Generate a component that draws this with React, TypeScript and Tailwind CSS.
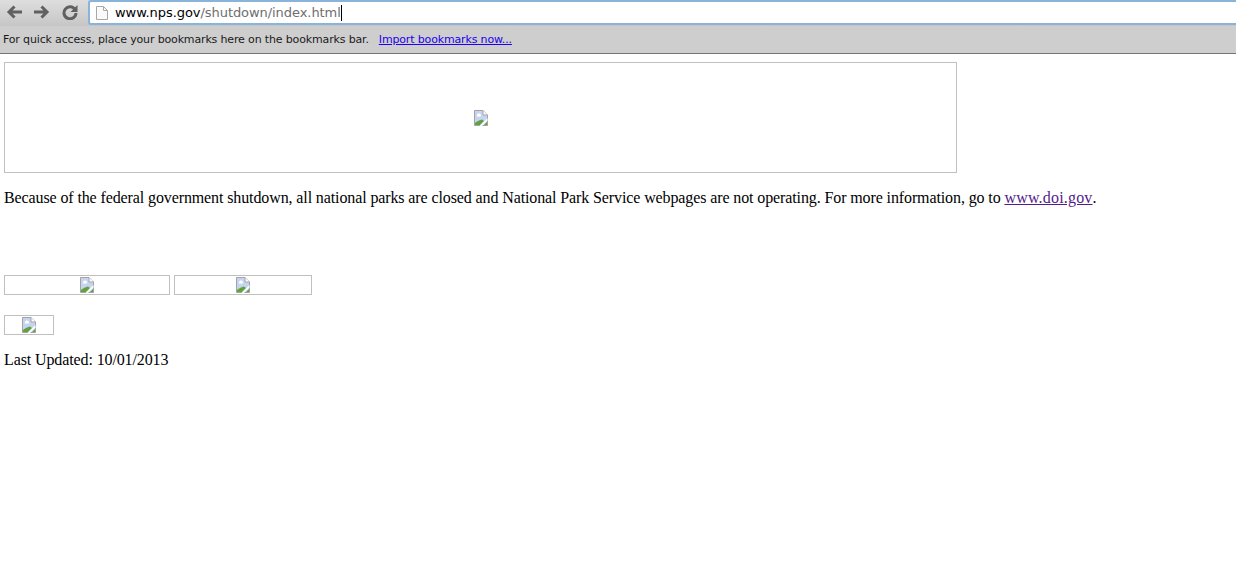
import React from 'react';

const BrokenImage: React.FC = () => (
  <svg width="14" height="16" viewBox="0 0 14 16" className="block">
    <path d="M0.5 0.5H9L13.5 5V15.5H0.5Z" fill="#c6d4f2" stroke="#a3a3a3" />
    <path d="M9 0.5V5H13.5" fill="#ffffff" stroke="#a3a3a3" />
    <path d="M3 5C4 3 6 3 7 5C8 6 6 7 4 6.5C3 6.5 2.5 6 3 5Z" fill="#ffffff" />
    <path d="M1 15V13C3 11 6 10 8 9.5L10 11L6 15Z" fill="#5fa33a" />
    <path d="M5.5 16L13.5 8V10.5L8 16Z" fill="#ffffff" />
    <path d="M10 15L13 12V15Z" fill="#5fa33a" />
  </svg>
);

const Placeholder: React.FC<{ className: string }> = ({ className }) => (
  <div className={`border border-[#c0c0c0] flex justify-center items-start ${className}`}>
    <BrokenImage />
  </div>
);

export default function App() {
  return (
    <div className="w-[1236px] h-[583px] overflow-hidden bg-white font-['Liberation_Serif',serif] text-black">
      <div className="h-[26px] flex items-start bg-gradient-to-b from-[#dedede] to-[#c6c6c6]">
        <div className="flex items-center gap-[12px] pl-[6px] pt-[4px] w-[88px] text-[#606060]">
          <svg width="16" height="16" viewBox="0 0 16 16" fill="none" stroke="currentColor" strokeWidth="3">
            <path d="M16 8H3M8.5 2.5L3 8l5.5 5.5" />
          </svg>
          <svg width="16" height="16" viewBox="0 0 16 16" fill="none" stroke="currentColor" strokeWidth="3">
            <path d="M0 8h13M7.5 2.5L13 8l-5.5 5.5" />
          </svg>
          <svg width="16" height="16" viewBox="0 0 16 16" fill="none" stroke="currentColor" strokeWidth="3">
            <path d="M13 5.5A6 6 0 1 0 14 9" />
            <path d="M15.5 1v7H8.5z" fill="currentColor" stroke="none" />
          </svg>
        </div>
        <div className="flex-1 h-[25px] bg-white border-2 border-r-0 border-[#8ab3d9] rounded-l-[3px] flex items-center pl-[6px]">
          <svg width="12" height="14" viewBox="0 0 12 14" fill="#fafafa" stroke="#a8a8a8">
            <path d="M0.5 0.5H7.5L11.5 4.5V13.5H0.5Z" />
            <path d="M7.5 0.5V4.5H11.5" fill="none" />
          </svg>
          <span className="ml-[7px] font-['DejaVu_Sans',sans-serif] text-[13px] tracking-[-0.06px] leading-none text-[#6e6e6e]">
            <span className="text-black">www.nps.gov</span>/shutdown/index.html
          </span>
          <span className="w-px h-[16px] bg-black" />
        </div>
      </div>
      <div className="h-[28px] bg-[#cecece] border-b border-[#767676] flex items-center pl-[3px] pt-[1px] font-['DejaVu_Sans',sans-serif] text-[11px] tracking-[-0.15px] text-[#1a1a1a]">
        <span>For quick access, place your bookmarks here on the bookmarks bar.</span>
        <span className="ml-[10px] text-[#2200ee] underline">Import bookmarks now...</span>
      </div>
      <div className="pl-[4px] pt-[8px] text-[16px] leading-[18px] tracking-[-0.112px]">
        <Placeholder className="w-[953px] h-[111px] pt-[47px]" />
        <p className="mt-[16px]">
          Because of the federal government shutdown, all national parks are closed and National Park Service webpages are not operating. For more information, go to{' '}
          <span className="text-[#551a8b] underline tracking-[0.18px]">www.doi.gov</span>.
        </p>
        <div className="flex gap-[4px] mt-[68px]">
          <Placeholder className="w-[166px] h-[20px] pt-[1px]" />
          <Placeholder className="w-[138px] h-[20px] pt-[1px]" />
        </div>
        <Placeholder className="w-[50px] h-[20px] pt-[1px] mt-[20px]" />
        <p className="mt-[16px]">Last Updated: 10/01/2013</p>
      </div>
    </div>
  );
}
